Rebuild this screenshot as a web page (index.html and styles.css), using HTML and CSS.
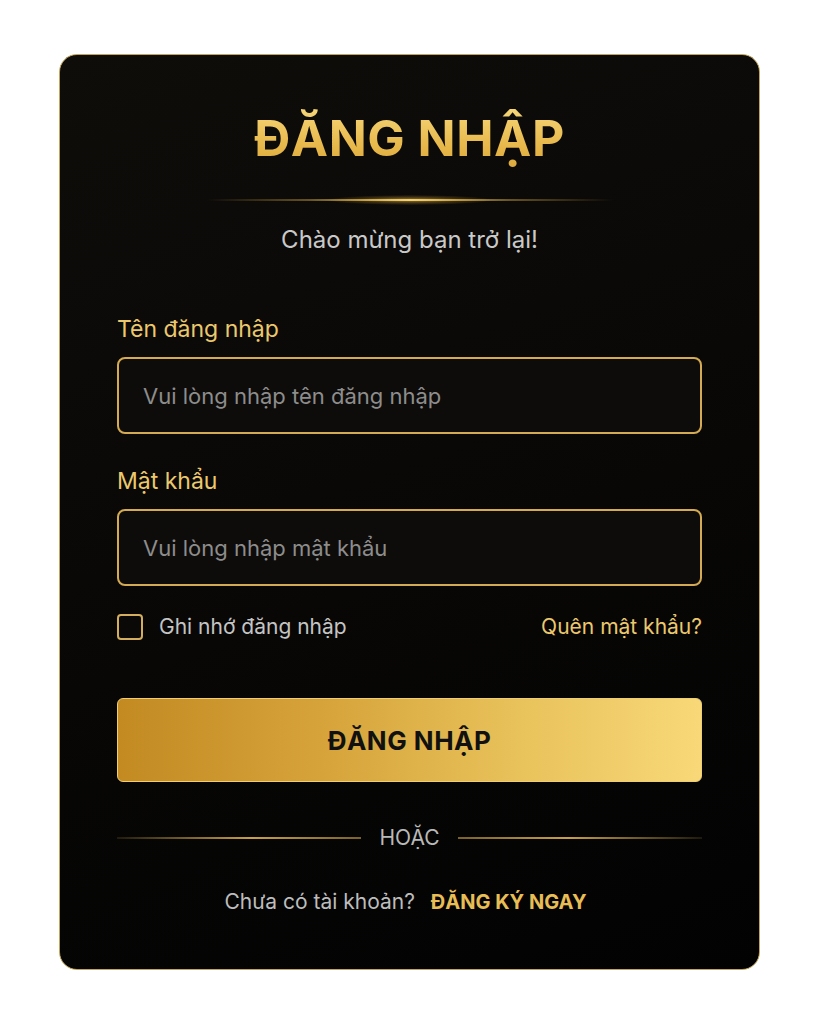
FILE: index.html
```html
<!DOCTYPE html>
<html lang="vi">
<head>
<meta charset="utf-8">
<title>Đăng nhập</title>
<link rel="stylesheet" href="styles.css">
</head>
<body>
<div class="card">
  <h1 class="title">ĐĂNG NHẬP</h1>
  <div class="glow-line"><span class="glow-core"></span></div>
  <p class="subtitle">Chào mừng bạn trở lại!</p>

  <form class="form">
    <label class="field field-first">
      <span class="label">Tên đăng nhập</span>
      <input class="input" type="text" placeholder="Vui lòng nhập tên đăng nhập">
    </label>
    <label class="field">
      <span class="label">Mật khẩu</span>
      <input class="input" type="password" placeholder="Vui lòng nhập mật khẩu">
    </label>

    <div class="options">
      <label class="remember">
        <span class="checkbox"></span>
        <span>Ghi nhớ đăng nhập</span>
      </label>
      <a class="forgot" href="#">Quên mật khẩu?</a>
    </div>

    <button class="submit" type="button">ĐĂNG NHẬP</button>
  </form>

  <div class="divider">
    <span class="line line-left"></span>
    <span class="divider-text">HOẶC</span>
    <span class="line line-right"></span>
  </div>

  <p class="signup">Chưa có tài khoản? <a class="signup-link" href="#">ĐĂNG KÝ NGAY</a></p>
</div>
</body>
</html>
```

FILE: styles.css
```css
* { box-sizing: border-box; }

html, body {
  margin: 0;
  padding: 0;
  background: #ffffff;
}

body {
  font-family: "Inter", "Noto Sans", "DejaVu Sans", sans-serif;
  padding-top: 54px;
}

.card {
  width: 701px;
  height: 916px;
  margin: 0 auto;
  padding: 52px 57px 0;
  border-radius: 18px;
  border: 1.5px solid #c2a556;
  background: linear-gradient(160deg, #0f0d0a 0%, #080706 55%, #020202 100%);
  display: flex;
  flex-direction: column;
}

.title {
  margin: 0;
  text-align: center;
  font-size: 50px;
  line-height: 62px;
  font-weight: 700;
  letter-spacing: 0.5px;
  background: linear-gradient(180deg, #f6d77a 0%, #e8b94c 60%, #dba83c 100%);
  -webkit-background-clip: text;
  background-clip: text;
  color: transparent;
}

.glow-line {
  position: relative;
  height: 2px;
  margin: 30px auto 0;
  width: 406px;
  background: linear-gradient(90deg, rgba(212,168,64,0) 0%, rgba(212,168,64,0.45) 25%, #f3cf6c 50%, rgba(212,168,64,0.45) 75%, rgba(212,168,64,0) 100%);
}

.glow-core {
  position: absolute;
  left: 50%;
  top: 50%;
  width: 160px;
  height: 10px;
  transform: translate(-50%, -50%);
  border-radius: 50%;
  background: radial-gradient(ellipse at center, rgba(255,214,110,0.55) 0%, rgba(240,180,60,0.2) 45%, rgba(240,180,60,0) 75%);
}

.subtitle {
  margin: 24px 0 0;
  text-align: center;
  font-size: 24px;
  line-height: 30px;
  color: #c9c9c9;
}

.form {
  margin-top: 60px;
  display: flex;
  flex-direction: column;
}

.field {
  display: flex;
  flex-direction: column;
}

.field-first {
  margin-bottom: 33px;
}

.label {
  font-size: 23px;
  line-height: 28px;
  color: #ecc86d;
  margin-bottom: 14px;
}

.input {
  height: 77px;
  border: 2px solid #d4ab52;
  border-radius: 8px;
  background: #0d0c0a;
  padding: 0 24px;
  font-family: inherit;
  font-size: 22px;
  color: #ddd;
  outline: none;
}

.input::placeholder {
  color: #8d8d8d;
}

.options {
  display: flex;
  justify-content: space-between;
  align-items: center;
  margin-top: 28px;
}

.remember {
  display: flex;
  align-items: center;
  gap: 16px;
  font-size: 21px;
  line-height: 26px;
  color: #c4c4c4;
}

.checkbox {
  width: 26px;
  height: 26px;
  border: 2px solid #d2ae5e;
  border-radius: 4px;
  background: #0a0907;
}

.forgot {
  font-size: 21px;
  line-height: 26px;
  color: #ecc86d;
  text-decoration: none;
}

.submit {
  margin-top: 58px;
  height: 84px;
  border: 1px solid #f0cf72;
  border-radius: 6px;
  background: linear-gradient(90deg, #c38a22 0%, #d6a33a 35%, #e9c35c 70%, #f8d878 100%);
  font-family: inherit;
  font-size: 26px;
  font-weight: 700;
  color: #111;
  letter-spacing: 0.5px;
}

.divider {
  margin-top: 43px;
  display: flex;
  align-items: center;
  gap: 18px;
}

.line {
  flex: 1;
  height: 2px;
}

.line-left {
  background: linear-gradient(90deg, rgba(190,150,60,0.15) 0%, #c9a04a 55%, rgba(200,160,70,0.6) 100%);
}

.line-right {
  background: linear-gradient(90deg, rgba(200,160,70,0.6) 0%, #c9a04a 45%, rgba(190,150,60,0.15) 100%);
}

.divider-text {
  font-size: 21px;
  color: #b9b9b9;
}

.signup {
  margin: 39px 0 0;
  padding-right: 8px;
  text-align: center;
  font-size: 21px;
  color: #bdbdbd;
}

.signup-link {
  margin-left: 10px;
  font-size: 20px;
  color: #e8bd55;
  font-weight: 700;
  text-decoration: none;
}
```
